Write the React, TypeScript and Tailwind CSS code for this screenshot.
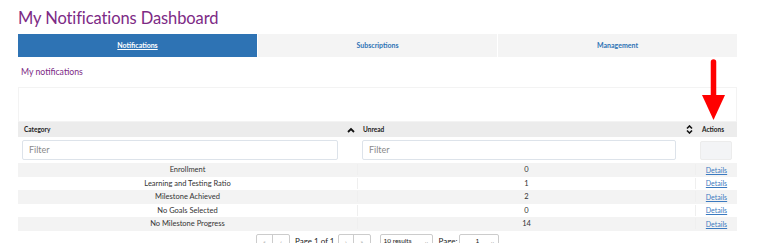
import React from 'react';

const rows = [
  { category: 'Enrollment', unread: 0 },
  { category: 'Learning and Testing Ratio', unread: 1 },
  { category: 'Milestone Achieved', unread: 2 },
  { category: 'No Goals Selected', unread: 0 },
  { category: 'No Milestone Progress', unread: 14 },
];

function SortUp() {
  return (
    <svg width="8" height="6" viewBox="0 0 8 6">
      <path d="M1 5l3-3 3 3" fill="none" stroke="#111" strokeWidth="1.8" />
    </svg>
  );
}

function SortBoth() {
  return (
    <svg width="7" height="9" viewBox="0 0 7 9">
      <path d="M1 3.5l2.5-2.5 2.5 2.5M1 5.5l2.5 2.5 2.5-2.5" fill="none" stroke="#111" strokeWidth="1.6" />
    </svg>
  );
}

export default function App() {
  return (
    <div className="relative h-[243px] w-[759px] overflow-hidden bg-white font-['Lato',sans-serif]">
      <div className="ml-[18px] w-[719px] pt-[8px]">
        <h1 className="h-[26px] text-[16.5px] leading-[20px] tracking-[-0.1px] text-[#7d2a85]">My Notifications Dashboard</h1>

        <div className="grid h-[23px] grid-cols-3 gap-px">
          <div className="flex items-center justify-center bg-[#2e73b4] text-[7px] font-bold text-white underline">Notifications</div>
          <div className="flex items-center justify-center bg-[#f4f4f4] text-[7px] font-bold text-[#2e73b4]">Subscriptions</div>
          <div className="flex items-center justify-center bg-[#f4f4f4] text-[7px] font-bold text-[#2e73b4]">Management</div>
        </div>

        <div className="flex h-[30px] items-center pl-[3px] text-[8.7px] text-[#7d2a85]">My notifications</div>

        <div className="h-[35px] border border-[#f3f3f3] bg-white" />

        <div className="grid grid-cols-[340px_338px_41px] bg-[#ececec] text-[6.5px] font-bold text-[#222]">
          <div className="flex h-[15px] items-center justify-between pl-[6px] pr-[3px]">
            <span>Category</span>
            <SortUp />
          </div>
          <div className="flex h-[15px] items-center justify-between pl-[5px] pr-[3px]">
            <span>Unread</span>
            <SortBoth />
          </div>
          <div className="flex h-[15px] items-center pl-[6px]">Actions</div>
        </div>

        <div className="grid h-[26px] grid-cols-[340px_338px_41px] items-center">
          <div className="pl-[4px] pr-[20px]">
            <div className="flex h-[20px] items-center rounded-[2px] border border-[#dde3ea] px-[6px] text-[9px] text-[#8a8a8a]">Filter</div>
          </div>
          <div className="pl-[4px] pr-[20px]">
            <div className="flex h-[20px] items-center rounded-[2px] border border-[#dde3ea] px-[6px] text-[9px] text-[#8a8a8a]">Filter</div>
          </div>
          <div className="pl-[4px] pr-[5px]">
            <div className="h-[19px] rounded-[2px] border border-[#ececec] bg-[#f3f4f6]" />
          </div>
        </div>

        {rows.map((r, i) => (
          <div
            key={r.category}
            className={`grid h-[13.5px] grid-cols-[340px_338px_41px] items-center text-[7.5px] text-[#333] ${i % 2 === 0 ? 'bg-[#f3f3f3]' : 'bg-white'}`}
          >
            <div className="border-r border-[#efefef] text-center">{r.category}</div>
            <div className="border-r border-[#efefef] text-center">{r.unread}</div>
            <div className="text-center text-[7px] text-[#3b7ac0] underline">Details</div>
          </div>
        ))}

        <div className="flex items-start pt-[3px] pl-[238px] text-[8px] text-[#222]">
          <div className="flex h-[15px] w-[34px] rounded-[2px] border border-[#ccc] text-[6px] text-[#999]">
            <span className="flex w-1/2 items-center justify-center border-r border-[#ccc]">«</span>
            <span className="flex w-1/2 items-center justify-center">‹</span>
          </div>
          <span className="ml-[5px] leading-[15px]">Page 1 of 1</span>
          <div className="ml-[3px] flex h-[15px] w-[33px] rounded-[2px] border border-[#ccc] text-[6px] text-[#999]">
            <span className="flex w-1/2 items-center justify-center border-r border-[#ccc]">›</span>
            <span className="flex w-1/2 items-center justify-center">»</span>
          </div>
          <div className="ml-[9px] flex h-[15px] w-[53px] items-center justify-between rounded-[2px] border border-[#ccc] px-[3px] text-[6.5px]">
            <span>10 results</span>
            <span className="text-[6px]">⌄</span>
          </div>
          <span className="ml-[6px] leading-[15px]">Page:</span>
          <div className="ml-[2px] flex h-[15px] w-[40px] items-center justify-between rounded-[2px] border border-[#ccc] px-[3px] text-[6.5px]">
            <span className="pl-[12px]">1</span>
            <span className="text-[6px]">⌄</span>
          </div>
        </div>
      </div>

      <svg className="absolute left-[700px] top-[58px]" width="28" height="64" viewBox="0 0 28 64">
        <path d="M13.5 4V38" stroke="#ff0000" strokeWidth="5.5" strokeLinecap="round" />
        <path d="M2 37H25L13.5 62Z" fill="#ff0000" />
      </svg>
    </div>
  );
}
